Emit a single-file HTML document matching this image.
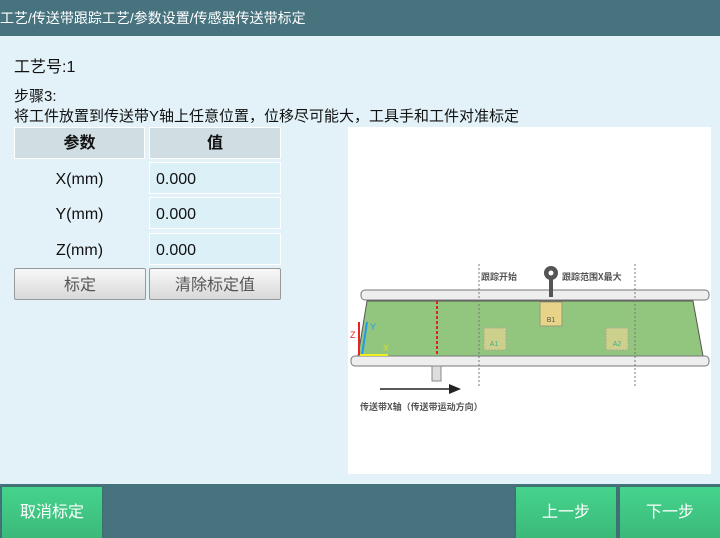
<html><head><style>
body{margin:0;width:720px;height:538px;background:#e3f2f8;font-family:"Liberation Sans","Noto Sans CJK SC",sans-serif;position:relative;overflow:hidden;color:#111}
.hd{position:absolute;left:0;top:0;width:720px;height:36px;background:#47737f;color:#fff;font-size:14px;line-height:36px}
.t{position:absolute;font-size:15px}
.c{position:absolute;box-sizing:border-box;font-size:16px;line-height:31px}
.h{background:#d0dde2;border:1px solid #fff;text-align:center;font-weight:bold}
.v{background:#dbf0f7;border:1px solid #fff;padding-left:6px;line-height:33px}
.l{text-align:center;line-height:36px}
.b{position:absolute;box-sizing:border-box;border:1px solid #999;border-radius:2px;background:linear-gradient(#f8f8f8,#d8d8d8);color:#555;font-size:16px;text-align:center;line-height:33px}
.ft{position:absolute;left:0;top:484px;width:720px;height:54px;background:#47737f}
.g{position:absolute;top:487px;height:51px;background:linear-gradient(#45d48c,#3bb97a);color:#fff;font-size:16px;text-align:center;line-height:51px;box-shadow:0 0 2px #2a6a50}
</style></head><body>
<div class="hd">工艺/传送带跟踪工艺/参数设置/传感器传送带标定</div>
<div class="t" style="left:14px;top:53px;font-size:16px">工艺号:1</div>
<div class="t" style="left:14px;top:85px">步骤3:</div>
<div class="t" style="left:14px;top:105px">将工件放置到传送带Y轴上任意位置，位移尽可能大，工具手和工件对准标定</div>
<div class="c h" style="left:14px;top:127px;width:131px;height:32px">参数</div>
<div class="c h" style="left:149px;top:127px;width:132px;height:32px">值</div>
<div class="c l" style="left:14px;top:162px;width:131px">X(mm)</div>
<div class="c v" style="left:149px;top:162px;width:132px;height:32px">0.000</div>
<div class="c l" style="left:14px;top:197px;width:131px">Y(mm)</div>
<div class="c v" style="left:149px;top:197px;width:132px;height:32px">0.000</div>
<div class="c l" style="left:14px;top:233px;width:131px">Z(mm)</div>
<div class="c v" style="left:149px;top:233px;width:132px;height:32px">0.000</div>
<div class="b" style="left:14px;top:268px;width:132px;height:32px">标定</div>
<div class="b" style="left:149px;top:268px;width:132px;height:32px">清除标定值</div>
<svg style="position:absolute;left:0;top:0" width="720" height="538">
<rect x="348" y="127" width="363" height="347" fill="#fff"/>
<polygon points="367,301 693,301 703,356 358,356" fill="#92c67f" stroke="#555" stroke-width="1"/>
<rect x="361" y="290" width="348" height="10" rx="4" fill="#eee" stroke="#777"/>
<rect x="351" y="356" width="358" height="10" rx="4" fill="#eee" stroke="#777"/>
<line x1="479" y1="264" x2="479" y2="387" stroke="#777" stroke-dasharray="2,2"/>
<line x1="635" y1="264" x2="635" y2="387" stroke="#777" stroke-dasharray="2,2"/>
<line x1="437" y1="301" x2="437" y2="356" stroke="#d22" stroke-width="2" stroke-dasharray="3,2"/>
<rect x="540" y="302" width="22" height="24" fill="#e8d488" stroke="#997"/>
<text x="551" y="322" font-size="7" text-anchor="middle" fill="#555">B1</text>
<circle cx="551" cy="273" r="7" fill="#555"/><circle cx="551" cy="273" r="2.5" fill="#fff"/>
<rect x="549" y="279" width="4" height="18" fill="#555"/>
<rect x="484" y="328" width="22" height="22" fill="#cdd08a" stroke="#aa9" stroke-dasharray="2,1"/>
<text x="494" y="346" font-size="7" text-anchor="middle" fill="#4a8">A1</text>
<rect x="606" y="328" width="22" height="22" fill="#cdd08a" stroke="#aa9" stroke-dasharray="2,1"/>
<text x="617" y="346" font-size="7" text-anchor="middle" fill="#4a8">A2</text>
<line x1="359" y1="355" x2="359" y2="322" stroke="#e22" stroke-width="2"/>
<line x1="362" y1="355" x2="367" y2="322" stroke="#29e" stroke-width="2"/>
<line x1="360" y1="355" x2="388" y2="355" stroke="#ee2" stroke-width="2"/>
<text x="350" y="338" font-size="9" fill="#e22">Z</text><text x="370" y="330" font-size="9" fill="#29e">Y</text><text x="383" y="351" font-size="9" fill="#dd2">X</text>
<rect x="432" y="366" width="9" height="15" fill="#ddd" stroke="#888"/>
<line x1="380" y1="389" x2="452" y2="389" stroke="#222" stroke-width="1.5"/>
<polygon points="461,389 449,384 449,394" fill="#222"/>
<text x="481" y="280" font-size="9" font-weight="bold" fill="#555" font-family="Noto Sans CJK SC">跟踪开始</text>
<text x="562" y="280" font-size="9" font-weight="bold" fill="#555" font-family="Noto Sans CJK SC">跟踪范围X最大</text>
<text x="360" y="410" font-size="9" font-weight="bold" fill="#555" font-family="Noto Sans CJK SC">传送带X轴（传送带运动方向）</text>
</svg>
<div class="ft"></div>
<div class="g" style="left:2px;width:100px">取消标定</div>
<div class="g" style="left:516px;width:100px">上一步</div>
<div class="g" style="left:620px;width:100px">下一步</div>
</body></html>
